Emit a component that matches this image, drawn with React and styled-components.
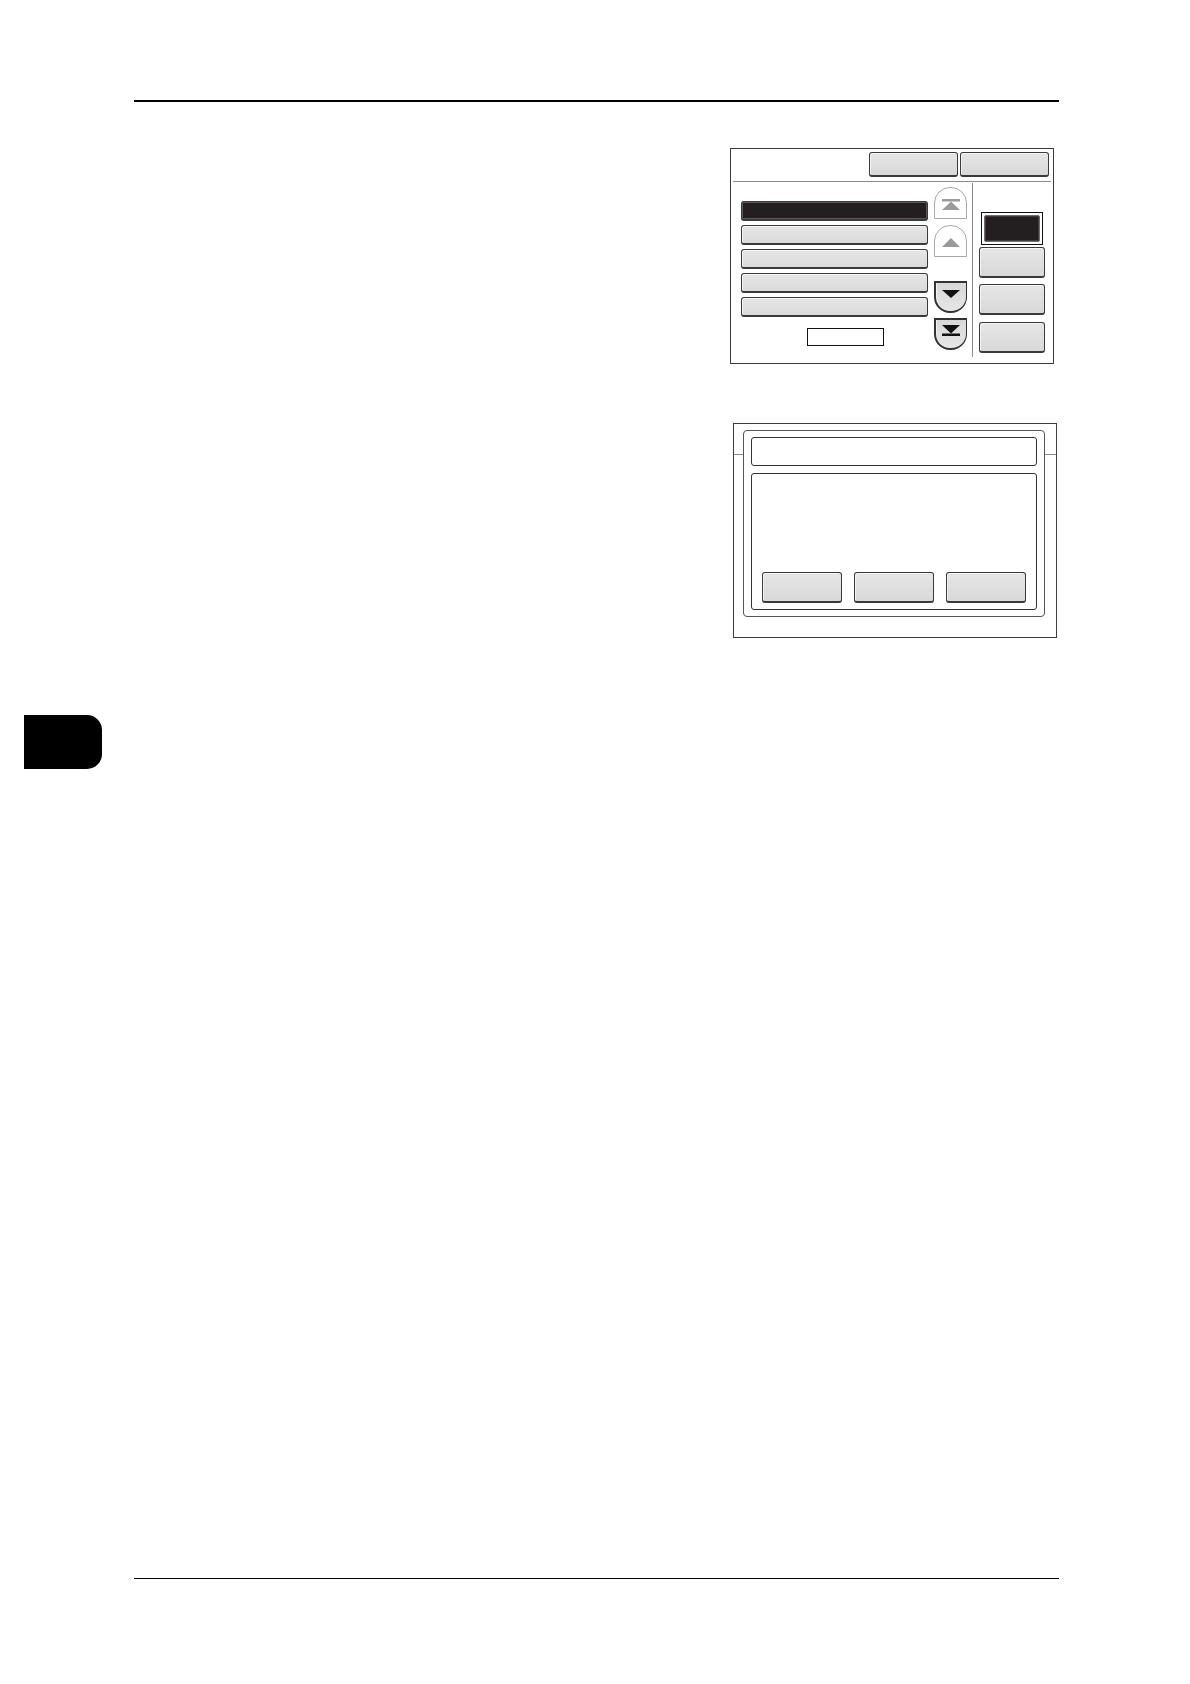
import React from "react";
import styled, { createGlobalStyle, css } from "styled-components";

const GlobalStyle = createGlobalStyle`
  html, body {
    margin: 0;
    padding: 0;
    background: #ffffff;
    font-family: "Liberation Sans", Arial, sans-serif;
  }
`;

const Page = styled.div`
  width: 1190px;
  height: 1684px;
  display: flex;
  flex-direction: column;
  box-sizing: border-box;
  padding-top: 100px;
`;

const Rule = styled.div`
  margin-left: 134px;
  width: 925px;
  height: 1.5px;
  background: #000;
  flex-shrink: 0;
`;

const FootRule = styled(Rule)`
  margin-top: auto;
  margin-bottom: 105px;
`;

const PanelRow = styled.div`
  display: flex;
  margin-left: ${(p) => p.left}px;
  margin-top: ${(p) => p.top}px;
`;

/* gray bevel key */
const Key = styled.div`
  box-sizing: border-box;
  width: ${(p) => p.w}px;
  height: ${(p) => p.h}px;
  background: linear-gradient(#e6e6e6, #d8d8d8);
  border: 1px solid #3a3a3a;
  border-right-width: 1.5px;
  border-bottom-width: 2px;
  border-radius: 3px;
  box-shadow: inset 1px 1px 0 #f4f4f4;
  flex-shrink: 0;
`;

/* ---------- panel 1 : list screen ---------- */
const Screen = styled.div`
  box-sizing: border-box;
  width: 324px;
  height: 216px;
  border: 1px solid #3c3c3c;
  display: flex;
  flex-direction: column;
  background: #fff;
`;

const TopBar = styled.div`
  height: 32px;
  box-sizing: border-box;
  padding: 3px 4px 0 0;
  display: flex;
  justify-content: flex-end;
  gap: 2px;
`;

const HLine = styled.div`
  height: 1px;
  background: #8a8a8a;
  margin: 0 2px;
`;

const Body = styled.div`
  display: flex;
  padding-left: 10px;
  flex: 1;
`;

const ListCol = styled.div`
  width: 187px;
  padding-top: 19px;
  display: flex;
  flex-direction: column;
  gap: 4px;
`;

const ListRow = styled.div`
  box-sizing: border-box;
  height: 20px;
  border-radius: 3px;
  border: 1px solid #3a3a3a;
  border-bottom-width: 2px;
  ${(p) =>
    p.dark
      ? css`
          background: #231f20;
          box-shadow: inset 0 0 0 1px #5a5a5a;
        `
      : css`
          background: linear-gradient(#e6e6e6, #dadada);
          box-shadow: inset 1px 1px 0 #f4f4f4;
        `}
`;

const PageBox = styled.div`
  width: 77px;
  height: 18px;
  box-sizing: border-box;
  border: 1px solid #111;
  margin: 7px 0 0 66px;
`;

const ScrollCol = styled.div`
  width: 33px;
  margin-left: 6px;
  padding-top: 5px;
  display: flex;
  flex-direction: column;
`;

const ScrollBtn = styled.div`
  box-sizing: border-box;
  width: 33px;
  height: 32px;
  margin-top: ${(p) => p.gap || 0}px;
  display: flex;
  align-items: center;
  justify-content: center;
  ${(p) =>
    p.down
      ? css`
          background: linear-gradient(#d8d8d8, #e6e6e6);
          border: 1px solid #333;
          border-left-width: 2px;
          border-right-width: 1.5px;
          border-bottom-width: 2px;
          border-top-width: 2.5px;
          border-radius: 0 0 16px 16px;
          padding-bottom: 5px;
          box-shadow: inset 1px 0 0 #f2f2f2;
        `
      : css`
          background: #fff;
          border: 1px solid #a8a8a8;
          border-radius: 16px 16px 0 0;
          padding-top: 5px;
        `}
`;

const VLine = styled.div`
  width: 1px;
  height: 174px;
  margin: 1px 0 0 5px;
  background: #8a8a8a;
`;

const SideCol = styled.div`
  width: 66px;
  margin-left: 6px;
  padding-top: 30px;
  display: flex;
  flex-direction: column;
`;

const SelectedFrame = styled.div`
  box-sizing: border-box;
  width: 62px;
  height: 33px;
  margin-left: 2px;
  border: 1px solid #111;
  padding: 2px;
  background: #fff;
`;

const SelectedFill = styled.div`
  height: 100%;
  box-sizing: border-box;
  background: #231f20;
  border: 1px solid #6e6e6e;
  border-radius: 2px;
  box-shadow: inset 0 0 0 1px #3a3a3a;
`;

const SideKey = styled(Key)`
  margin-top: ${(p) => p.gap}px;
`;

/* ---------- panel 2 : dialog ---------- */
const DialogScreen = styled.div`
  position: relative;
  box-sizing: border-box;
  width: 324px;
  height: 215px;
  border: 1px solid #3c3c3c;
  padding: 6px 11px 0 9px;
  background: #fff;

  &::before {
    content: "";
    position: absolute;
    left: 0;
    right: 0;
    top: 30px;
    height: 1px;
    background: #8a8a8a;
  }
`;

const DialogFrame = styled.div`
  position: relative;
  z-index: 1;
  box-sizing: border-box;
  height: 187px;
  border: 1px solid #555;
  border-radius: 4px;
  background: #fff;
  padding: 6px 7px 0 7px;
  display: flex;
  flex-direction: column;
  gap: 7px;
`;

const TitleBox = styled.div`
  box-sizing: border-box;
  height: 29px;
  border: 1px solid #333;
  border-radius: 3px;
`;

const MessageBox = styled.div`
  box-sizing: border-box;
  height: 137px;
  border: 1px solid #333;
  border-radius: 3px;
  display: flex;
  align-items: flex-end;
  gap: 12px;
  padding: 0 10px 6px 10px;
`;

/* ---------- side tab ---------- */
const Tab = styled.div`
  width: 78px;
  height: 54px;
  margin: 77px 0 0 24px;
  background: #000;
  border-radius: 0 15px 15px 0;
  flex-shrink: 0;
`;

const UpArrow = ({ bar, color }) => (
  <svg width="20" height="14" viewBox="0 0 20 14">
    {bar && <rect x="1" y="1" width="18" height="2.5" fill={color} />}
    <polygon points={bar ? "10,3.5 19,12 1,12" : "10,2 19,11 1,11"} fill={color} />
  </svg>
);

const DownArrow = ({ bar, color }) => (
  <svg width="20" height="14" viewBox="0 0 20 14">
    <polygon points={bar ? "1,1 19,1 10,9.5" : "1,3 19,3 10,11"} fill={color} />
    {bar && <rect x="1" y="9.5" width="18" height="2.5" fill={color} />}
  </svg>
);

export default function App() {
  const rows = [true, false, false, false, false];

  return (
    <>
      <GlobalStyle />
      <Page>
        <Rule />

        <PanelRow left={730} top={46}>
          <Screen>
            <TopBar>
              <Key w={89} h={25} />
              <Key w={89} h={25} />
            </TopBar>
            <HLine />
            <Body>
              <ListCol>
                {rows.map((dark, i) => (
                  <ListRow key={i} dark={dark} />
                ))}
                <PageBox />
              </ListCol>
              <ScrollCol>
                <ScrollBtn>
                  <UpArrow bar color="#9a9a9a" />
                </ScrollBtn>
                <ScrollBtn gap={6}>
                  <UpArrow color="#9a9a9a" />
                </ScrollBtn>
                <ScrollBtn down gap={24}>
                  <DownArrow color="#111" />
                </ScrollBtn>
                <ScrollBtn down gap={5}>
                  <DownArrow bar color="#111" />
                </ScrollBtn>
              </ScrollCol>
              <VLine />
              <SideCol>
                <SelectedFrame>
                  <SelectedFill />
                </SelectedFrame>
                <SideKey w={66} h={31} gap={2} />
                <SideKey w={66} h={31} gap={6} />
                <SideKey w={66} h={31} gap={7} />
              </SideCol>
            </Body>
          </Screen>
        </PanelRow>

        <PanelRow left={733} top={59}>
          <DialogScreen>
            <DialogFrame>
              <TitleBox />
              <MessageBox>
                <Key w={80} h={31} />
                <Key w={80} h={31} />
                <Key w={80} h={31} />
              </MessageBox>
            </DialogFrame>
          </DialogScreen>
        </PanelRow>

        <Tab />

        <FootRule />
      </Page>
    </>
  );
}
